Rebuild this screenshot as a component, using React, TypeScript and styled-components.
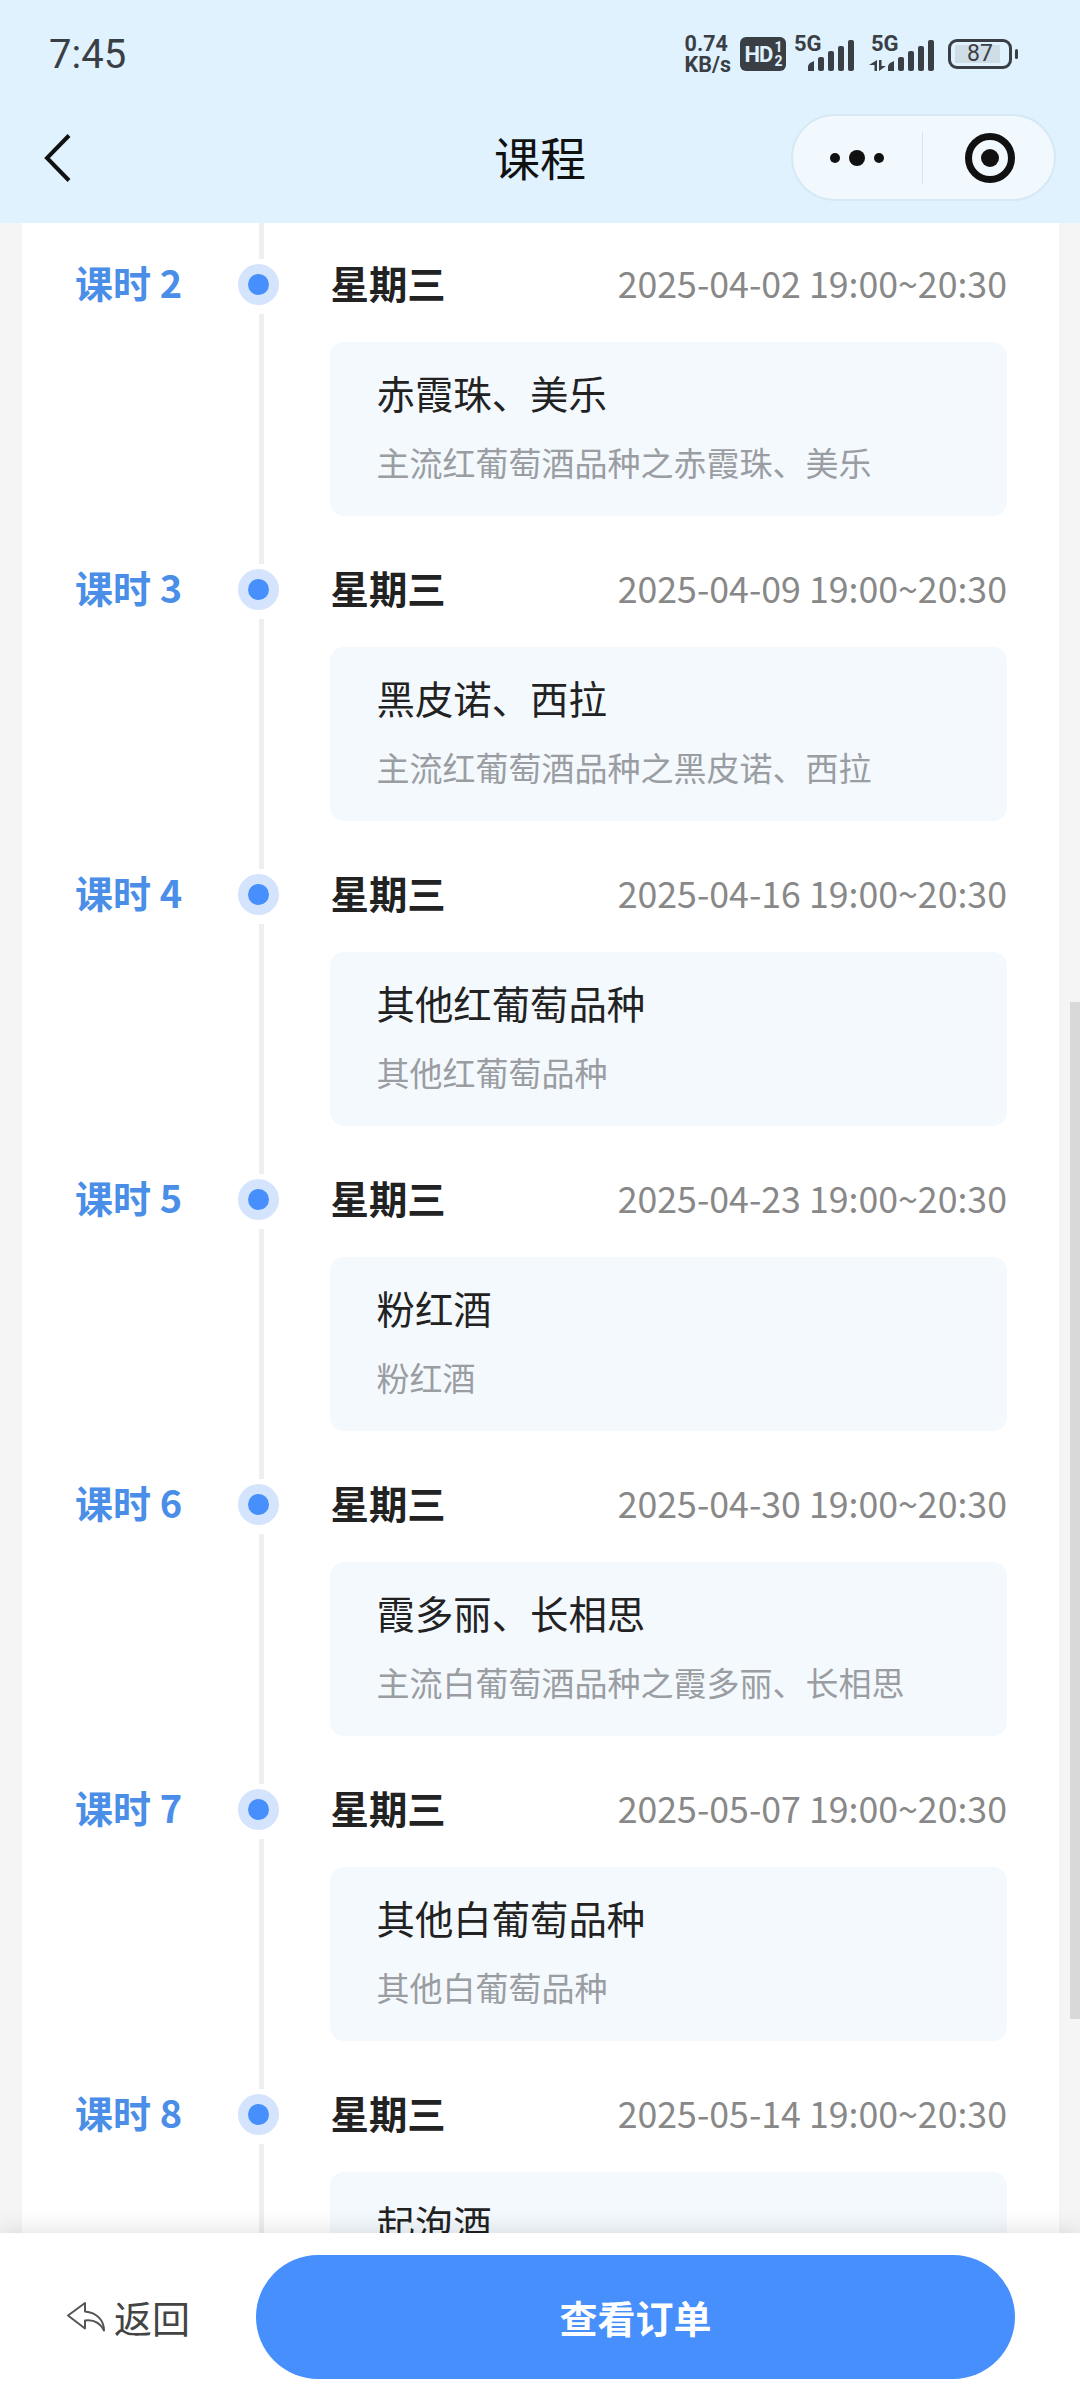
import styled, { createGlobalStyle } from "styled-components"

const lessons = [
    { no: 2, date: "2025-04-02", title: "赤霞珠、美乐", desc: "主流红葡萄酒品种之赤霞珠、美乐" },
    { no: 3, date: "2025-04-09", title: "黑皮诺、西拉", desc: "主流红葡萄酒品种之黑皮诺、西拉" },
    { no: 4, date: "2025-04-16", title: "其他红葡萄品种", desc: "其他红葡萄品种" },
    { no: 5, date: "2025-04-23", title: "粉红酒", desc: "粉红酒" },
    { no: 6, date: "2025-04-30", title: "霞多丽、长相思", desc: "主流白葡萄酒品种之霞多丽、长相思" },
    { no: 7, date: "2025-05-07", title: "其他白葡萄品种", desc: "其他白葡萄品种" },
    { no: 8, date: "2025-05-14", title: "起泡酒", desc: "起泡酒" }
]

const FONT = `"Noto Sans CJK SC", "Noto Sans", sans-serif`

const GlobalStyle = createGlobalStyle`
    html, body {
        margin: 0;
        padding: 0;
        background: #f5f5f5;
        font-family: ${FONT};
    }
    * {
        box-sizing: border-box;
    }
`

const Signal = ({ arrows }: { arrows?: boolean }) => (
    <svg width={arrows ? 68 : 48} height="32" viewBox={arrows ? "0 0 68 32" : "0 0 48 32"} fill="#3a3f45">
        <g transform={arrows ? "translate(20 0)" : undefined}>
            <path d="M0 31v-4q0-3 3-4.500l3-1.500v10z" />
            <rect x="10" y="17" width="6" height="14" rx="2" />
            <rect x="20" y="11" width="6" height="20" rx="2" />
            <rect x="30" y="6" width="6" height="25" rx="2" />
            <rect x="40" y="0" width="6" height="31" rx="2" />
        </g>
        {arrows && <path d="M9 20v11H6.500v-6L1 25zM11 31V20h2.500v6L18 26z" />}
    </svg>
)

const BackIcon = () => (
    <svg width="28" height="50" viewBox="0 0 28 50" fill="none" stroke="#111" strokeWidth="4">
        <path d="M25 2.500 3 25l22 22.500" />
    </svg>
)

const MoreIcon = () => (
    <svg width="56" height="20" viewBox="0 0 56 20" fill="#111">
        <circle cx="6" cy="10" r="5" />
        <circle cx="28" cy="10" r="8" />
        <circle cx="50" cy="10" r="5" />
    </svg>
)

const TargetIcon = () => (
    <svg width="50" height="50" viewBox="0 0 50 50">
        <circle cx="25" cy="25" r="21.500" fill="none" stroke="#111" strokeWidth="7" />
        <circle cx="25" cy="25" r="9" fill="#111" />
    </svg>
)

const ReplyIcon = () => (
    <svg width="40" height="32" viewBox="0 0 40 32" fill="none" stroke="#555" strokeWidth="2" strokeLinejoin="round">
        <path d="M19 2 2 14.500l17 13v-8c8-1 15 2 19 10 0-10-7-18-19-19z" />
    </svg>
)

export default function App() {
    return (
        <Screen>
            <GlobalStyle />
            <Header>
                <StatusBar>
                    <Clock>7:45</Clock>
                    <StatusIcons>
                        <NetSpeed>
                            <span>0.74</span>
                            <span>KB/s</span>
                        </NetSpeed>
                        <HdBadge>
                            HD
                            <HdSims>
                                <span>1</span>
                                <span>2</span>
                            </HdSims>
                        </HdBadge>
                        <Network>
                            <NetworkLabel>5G</NetworkLabel>
                            <Signal />
                        </Network>
                        <Network $arrows>
                            <NetworkLabel>5G</NetworkLabel>
                            <Signal arrows />
                        </Network>
                        <Battery>
                            <BatteryFill />
                            <BatteryText>87</BatteryText>
                        </Battery>
                    </StatusIcons>
                </StatusBar>
                <NavBar>
                    <BackButton>
                        <BackIcon />
                    </BackButton>
                    <NavTitle>课程</NavTitle>
                    <Capsule>
                        <CapsulePart>
                            <MoreIcon />
                        </CapsulePart>
                        <CapsuleDivider />
                        <CapsulePart $inset={3}>
                            <TargetIcon />
                        </CapsulePart>
                    </Capsule>
                </NavBar>
            </Header>

            <Scroller>
                <Panel>
                    <LeadIn />
                    {lessons.map((l) => (
                        <Row key={l.no}>
                            <LessonNo>课时 {l.no}</LessonNo>
                            <Track>
                                <Dot />
                                <TrackLine />
                            </Track>
                            <Content>
                                <RowHead>
                                    <Weekday>星期三</Weekday>
                                    <DateText>{l.date} 19:00~20:30</DateText>
                                </RowHead>
                                <Card>
                                    <CardTitle>{l.title}</CardTitle>
                                    <CardDesc>{l.desc}</CardDesc>
                                </Card>
                            </Content>
                        </Row>
                    ))}
                </Panel>
                <ScrollThumb />
            </Scroller>

            <Footer>
                <ReturnLink>
                    <ReplyIcon />
                    返回
                </ReturnLink>
                <OrderButton>查看订单</OrderButton>
            </Footer>
        </Screen>
    )
}

const Screen = styled.div`
    display: flex;
    flex-direction: column;
    width: 1080px;
    height: 2400px;
    overflow: hidden;
    background: #f5f5f5;
`

const Header = styled.header`
    flex: none;
    height: 223px;
    background: #e0f2fe;
`

const StatusBar = styled.div`
    display: flex;
    align-items: center;
    justify-content: space-between;
    height: 108px;
    padding: 0 68px 0 49px;
    color: #3a3f45;
`

const Clock = styled.div`
    font-family: Roboto, sans-serif;
    font-size: 40px;
    font-weight: 400;
`

const StatusIcons = styled.div`
    display: flex;
    align-items: center;
`

const NetSpeed = styled.div`
    display: flex;
    flex-direction: column;
    font-family: Roboto, sans-serif;
    font-size: 21.500px;
    font-weight: 700;
    line-height: 21px;
    margin-right: 9px;
`

const HdBadge = styled.div`
    display: flex;
    align-items: center;
    justify-content: center;
    width: 46px;
    height: 34px;
    border-radius: 6px;
    background: #3a3f45;
    color: #e0f2fe;
    font-family: Roboto, sans-serif;
    font-size: 22px;
    font-weight: 700;
    letter-spacing: -1px;
    margin-right: 5px;
`

const HdSims = styled.div`
    display: flex;
    flex-direction: column;
    font-size: 14px;
    line-height: 14px;
    margin-left: 2px;
`

const Network = styled.div<{ $arrows?: boolean }>`
    position: relative;
    display: flex;
    align-items: flex-end;
    height: 36px;
    margin-left: ${({ $arrows }) => ($arrows ? "12px" : "0")};
    padding-left: ${({ $arrows }) => ($arrows ? "0" : "17px")};
`

const NetworkLabel = styled.span`
    position: absolute;
    top: -3px;
    left: 3px;
    font-family: Roboto, sans-serif;
    font-size: 22px;
    font-weight: 700;
    line-height: 22px;
`

const Battery = styled.div`
    position: relative;
    display: flex;
    align-items: center;
    justify-content: center;
    width: 64px;
    height: 30px;
    margin-left: 12px;
    border: 3px solid #3a3f45;
    border-radius: 9px;

    &::after {
        content: "";
        position: absolute;
        right: -9px;
        top: 7px;
        width: 3px;
        height: 10px;
        border-radius: 2px;
        background: #3a3f45;
    }
`

const BatteryFill = styled.div`
    position: absolute;
    left: 4px;
    top: 3px;
    bottom: 3px;
    width: 45px;
    background: #cfdde6;
`

const BatteryText = styled.span`
    position: relative;
    font-family: Roboto, sans-serif;
    font-size: 23px;
    line-height: 24px;
`

const NavBar = styled.div`
    position: relative;
    display: flex;
    align-items: center;
    justify-content: space-between;
    height: 87px;
    margin-top: 6px;
    padding: 0 24px 0 44px;
`

const BackButton = styled.div`
    display: flex;
`

const NavTitle = styled.div`
    position: absolute;
    left: 0;
    right: 0;
    margin-top: -3px;
    text-align: center;
    font-size: 46px;
    line-height: 56px;
    color: #111;
`

const Capsule = styled.div`
    display: flex;
    align-items: center;
    width: 265px;
    height: 87px;
    border: 2px solid #d6e8f3;
    border-radius: 44px;
    background: #f1f9ff;
`

const CapsulePart = styled.div<{ $inset?: number }>`
    flex: 1;
    display: flex;
    align-items: center;
    justify-content: center;
    padding-left: ${({ $inset }) => $inset ?? 0}px;
`

const CapsuleDivider = styled.div`
    flex: none;
    width: 1px;
    height: 52px;
    background: #d8e4ec;
`

const Scroller = styled.div`
    position: relative;
    flex: 1;
    min-height: 0;
    overflow: hidden;
    padding: 0 21px 0 22px;
`

const Panel = styled.div`
    background: #fff;
`

const LeadIn = styled.div`
    width: 5px;
    height: 36px;
    margin-left: 237px;
    background: #efefef;
`

const Row = styled.div`
    display: grid;
    grid-template-columns: 217px 44px 1fr;
    height: 305px;
`

const LessonNo = styled.div`
    padding: 0 0 0 53px;
    height: 46px;
    line-height: 46px;
    font-size: 38px;
    font-weight: 700;
    color: #4a8ee8;
    white-space: nowrap;
`

const Track = styled.div`
    display: flex;
    flex-direction: column;
    align-items: center;
    height: 305px;
`

const Dot = styled.div`
    flex: none;
    width: 41px;
    height: 41px;
    margin: 5px 6px 9px 0;
    border-radius: 50%;
    background: #468ffc;
    border: 10px solid #d4e4fd;
`

const TrackLine = styled.div`
    flex: 1;
    width: 5px;
    background: #efefef;
`

const Content = styled.div`
    display: flex;
    flex-direction: column;
    padding: 0 52px 0 46.500px;
`

const RowHead = styled.div`
    display: flex;
    align-items: center;
    justify-content: space-between;
    height: 46px;
    margin-bottom: 37px;
`

const Weekday = styled.div`
    margin-left: 1px;
    font-size: 38.400px;
    font-weight: 700;
    color: #222;
`

const DateText = styled.div`
    font-size: 35.700px;
    color: #888;
    white-space: nowrap;
`

const Card = styled.div`
    display: flex;
    flex-direction: column;
    height: 174px;
    padding: 23px 47px 0;
    border-radius: 14px;
    background: #f4f9fe;
`

const CardTitle = styled.div`
    font-size: 38.400px;
    line-height: 54px;
    color: #222;
`

const CardDesc = styled.div`
    margin-top: 21px;
    font-size: 33px;
    line-height: 44px;
    color: #9a9da1;
`

const ScrollThumb = styled.div`
    position: absolute;
    top: 779px;
    right: 0;
    width: 10px;
    height: 1017px;
    background: #d9d9d9;
`

const Footer = styled.footer`
    position: relative;
    flex: none;
    display: flex;
    align-items: center;
    height: 167px;
    padding: 0 65px 0 66px;
    background: #fff;
    box-shadow: 0 0 24px rgba(0, 0, 0, 0.14);
`

const ReturnLink = styled.div`
    display: flex;
    align-items: center;
    gap: 8px;
    width: 190px;
    font-size: 38px;
    color: #444;
`

const OrderButton = styled.div`
    flex: 1;
    height: 124px;
    border-radius: 62px;
    background: #468ffc;
    color: #fff;
    text-align: center;
    font-size: 38px;
    font-weight: 700;
    line-height: 124px;
`
